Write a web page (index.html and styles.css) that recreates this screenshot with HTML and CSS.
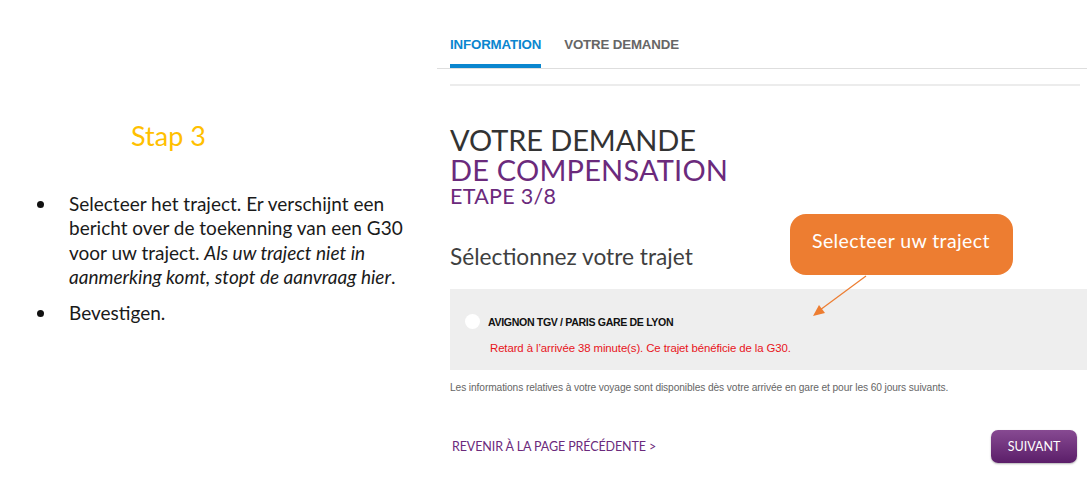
FILE: index.html
```html
<!DOCTYPE html>
<html lang="fr">
<head>
<meta charset="utf-8">
<title>Stap 3</title>
<link rel="stylesheet" href="styles.css">
</head>
<body>
<div class="page">
  <section class="guide">
    <h2 class="stap">Stap 3</h2>
    <ul class="steps">
      <li>Selecteer het traject. Er verschijnt een bericht over de toekenning van een G30 voor uw traject. <em>Als uw traject niet in aanmerking komt, stopt de aanvraag hier</em>.</li>
      <li>Bevestigen.</li>
    </ul>
  </section>
  <section class="site">
    <nav class="tabs">
      <span class="tab active">INFORMATION</span>
      <span class="tab">VOTRE DEMANDE</span>
    </nav>
    <div class="content">
      <div class="rule"></div>
      <h1 class="title">
        <span class="t1">VOTRE DEMANDE</span>
        <span class="t2">DE COMPENSATION</span>
        <span class="t3">ETAPE 3/8</span>
      </h1>
      <h3 class="select">Sélectionnez votre trajet</h3>
      <div class="trip">
        <div class="trip-row"><span class="radio"></span><span class="route">AVIGNON TGV / PARIS GARE DE LYON</span></div>
        <p class="delay">Retard à l’arrivée 38 minute(s). Ce trajet bénéficie de la G30.</p>
      </div>
      <p class="info">Les informations relatives à votre voyage sont disponibles dès votre arrivée en gare et pour les 60 jours suivants.</p>
      <div class="actions">
        <a class="back">REVENIR À LA PAGE PRÉCÉDENTE &gt;</a>
        <button class="next">SUIVANT</button>
      </div>
    </div>
    <div class="callout">Selecteer uw traject</div>
    <svg class="arrow" width="60" height="45" viewBox="0 0 60 45">
      <line x1="56" y1="2" x2="10" y2="36" stroke="#ED7D31" stroke-width="1.2"/>
      <polygon points="3,42 9,31 15,39" fill="#ED7D31"/>
    </svg>
  </section>
</div>
</body>
</html>
```
FILE: styles.css
```css
* { box-sizing: border-box; }
html, body { margin: 0; padding: 0; background: #fff; }
body { width: 1092px; height: 500px; overflow: hidden; }
.page { display: grid; grid-template-columns: 437px 650px; height: 500px; }

.guide { font-family: Lato, "Liberation Sans", sans-serif; color: #1a1a1a; }
.stap { margin: 120px 0 0 131px; font-weight: 400; font-size: 27px; line-height: 32px; color: #FFC000; }
.steps { margin: 40px 0 0 0; padding: 0 0 0 69px; list-style: none; font-size: 19px; line-height: 24.3px; letter-spacing: 0; }
.steps li { position: relative; width: 352px; }
.steps li::before { content: ""; position: absolute; left: -32px; top: 9px; width: 7px; height: 7px; border-radius: 50%; background: #111; }
.steps li + li { margin-top: 12px; }
.steps em { font-style: italic; }

.site { position: relative; font-family: Lato, "Liberation Sans", sans-serif; }
.tabs { display: flex; gap: 23px; padding: 37px 0 0 13px; height: 69px; border-bottom: 1px solid #dedede; }
.tab { font-family: "Liberation Sans", Arial, sans-serif; font-weight: 700; font-size: 13.3px; letter-spacing: -0.15px; color: #666; height: 31px; line-height: 16px; }
.tab.active { color: #0a86cf; border-bottom: 4px solid #0a86cf; }
.content { padding: 0 0 0 13px; }
.rule { height: 2px; background: #ececec; margin: 15px 7px 0 0; }
.title { margin: 39px 0 0 0; font-weight: 400; display: flex; flex-direction: column; }
.t1 { font-size: 29px; line-height: 30px; color: #333; letter-spacing: -0.1px; }
.t2 { font-size: 29px; line-height: 29px; color: #6b2a7c; letter-spacing: 0.2px; }
.t3 { font-size: 21.5px; line-height: 24px; color: #6b2a7c; letter-spacing: 0.3px; }
.select { margin: 36px 0 0 0; font-weight: 400; font-size: 22.7px; line-height: 26px; color: #3f3f3f; padding-bottom: 19px; border-bottom: 1px solid #eeeeee; }
.trip { background: #eeeeee; height: 80px; padding: 24px 0 0 15px; }
.trip-row { display: flex; align-items: center; gap: 8px; }
.radio { width: 15px; height: 15px; border-radius: 50%; background: #fff; }
.route { font-family: "Liberation Sans", Arial, sans-serif; font-weight: 700; font-size: 10.6px; letter-spacing: -0.35px; color: #111; }
.delay { margin: 13px 0 0 25px; font-family: "Liberation Sans", Arial, sans-serif; font-size: 11.4px; color: #e8141b; letter-spacing: -0.1px; }
.info { margin: 12px 0 0 0; font-family: "Liberation Sans", Arial, sans-serif; font-size: 10.2px; color: #666; letter-spacing: -0.1px; }
.actions { display: flex; justify-content: space-between; align-items: center; margin-top: 37px; }
.back { font-size: 12.5px; color: #6b2a7c; margin: 0 0 0 2px; letter-spacing: -0.1px; }
.next { width: 86px; height: 33px; border: none; border-radius: 7px; background: linear-gradient(#874a92, #5b1e69); color: #fff; font-family: Lato, "Liberation Sans", sans-serif; font-size: 12.5px; box-shadow: 0 1px 2px rgba(0,0,0,0.3); margin-right: 10px; }

.callout { position: absolute; left: 353px; top: 214px; width: 223px; height: 61px; border-radius: 16px; background: #ED7D31; color: #fff; font-size: 19.5px; letter-spacing: 0.4px; padding: 16px 0 0 22px; line-height: 22px; }
.arrow { position: absolute; left: 373px; top: 274px; }
```
